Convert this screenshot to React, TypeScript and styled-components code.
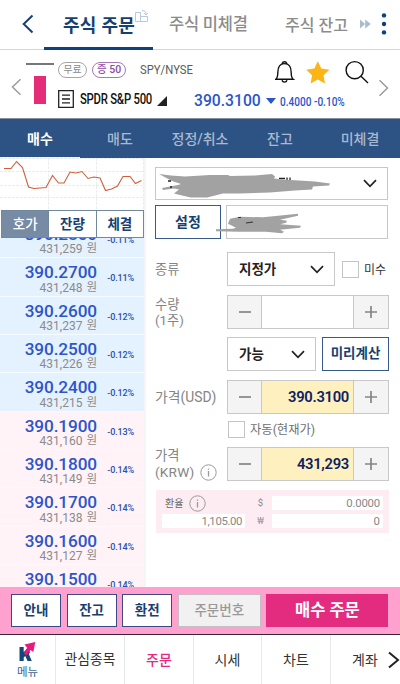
import React from 'react';
import styled, { createGlobalStyle, css } from 'styled-components';

const Global = createGlobalStyle`
  * { box-sizing: border-box; }
  html, body { margin: 0; padding: 0; background: #fff; }
  body { font-family: Roboto, "Noto Sans CJK KR", sans-serif; overflow: hidden; }
  button { font: inherit; }
`;

const navy = '#173f70';
const blue = '#2c55c9';

const Txt = styled.span<{ $s: number; $c?: string; $w?: number; $ls?: number; $sx?: number; $dy?: number }>`
  display: block;
  white-space: nowrap;
  line-height: 1;
  font-size: ${(p) => p.$s}px;
  color: ${(p) => p.$c || '#222'};
  font-weight: ${(p) => p.$w || 400};
  letter-spacing: ${(p) => p.$ls || 0}px;
  padding-top: ${(p) => p.$dy || 0}px;
  transform-origin: left center;
  ${(p) => p.$sx && css`transform: scaleX(${p.$sx});`}
`;

const Screen = styled.div`
  width: 400px;
  height: 684px;
  display: flex;
  flex-direction: column;
  overflow: hidden;
  background: #fff;
`;

const Header = styled.header`
  height: 50px;
  flex: none;
  display: grid;
  grid-template-columns: 44px 109px 110px 96px 14px 27px;
  border-bottom: 1px solid #d6d6d6;
`;
const HeadCell = styled.div<{ $active?: boolean; $pad?: number }>`
  height: 50px;
  display: flex;
  align-items: center;
  padding-left: ${(p) => p.$pad || 0}px;
  border-bottom: 3px solid ${(p) => (p.$active ? '#0e427c' : 'transparent')};
`;
const LinkIcon = styled.svg`
  flex: none;
  align-self: flex-start;
  margin: 10px 0 0 -1px;
`;

const Stock = styled.section`
  height: 69px;
  flex: none;
  display: grid;
  grid-template-columns: 26px 32px 320px 22px;
  border-bottom: 1px solid #87909c;
`;
const ArrowCell = styled.div<{ $right?: boolean }>`
  padding-top: ${(p) => (p.$right ? 29 : 28)}px;
  padding-left: ${(p) => (p.$right ? 0 : 11)}px;
`;
const Candle = styled.div`
  padding: 13px 0 0;
  display: flex;
  flex-direction: column;
  align-items: flex-start;
`;
const CandleLine = styled.div`
  width: 28px;
  height: 2px;
  background: #777;
`;
const CandleBody = styled.div`
  width: 12px;
  height: 28px;
  margin: 11px 0 0 8px;
  background: #e52c79;
`;
const StockInfo = styled.div`
  display: flex;
  flex-direction: column;
`;
const StockTop = styled.div`
  display: flex;
  height: 37px;
  align-items: flex-start;
  padding-top: 12px;
`;
const Pill = styled.div<{ $w: number; $c: string; $ml?: number }>`
  width: ${(p) => p.$w}px;
  height: 16px;
  margin-left: ${(p) => p.$ml || 0}px;
  border: 1px solid ${(p) => p.$c};
  border-radius: 8px;
  display: flex;
  align-items: center;
  justify-content: center;
`;
const Ticker = styled.div`
  width: 76px;
  flex: none;
  padding: 2px 0 0 14px;
`;
const TopIcons = styled.div`
  display: flex;
  margin: -3px 0 0 73px;
`;
const StockBottom = styled.div`
  display: flex;
  align-items: center;
  height: 24px;
`;
const StockName = styled.div`
  width: 77px;
  flex: none;
  margin-left: 6px;
`;
const Corner = styled.svg`
  flex: none;
  margin-top: 4px;
`;
const Quote = styled.div`
  display: flex;
  align-items: center;
  margin-left: 27px;
  padding-top: 4px;
`;
const Price = styled.div`
  width: 68px;
  flex: none;
`;
const Change = styled.div`
  width: 70px;
  padding-top: 2px;
`;

const Nav = styled.nav`
  height: 39px;
  flex: none;
  display: grid;
  grid-template-columns: repeat(5, 80px);
  background: #2d5385;
`;
const NavItem = styled.div<{ $active?: boolean }>`
  display: flex;
  align-items: center;
  justify-content: center;
  padding-top: ${(p) => (p.$active ? 2 : 1)}px;
  border-bottom: ${(p) => (p.$active ? '1px solid #f0f3f7' : '0')};
`;

const Main = styled.main`
  height: 429px;
  flex: none;
  display: flex;
`;
const Left = styled.aside`
  width: 146px;
  flex: none;
  display: flex;
  flex-direction: column;
  border-right: 2px solid #f5f5f9;
`;
const ModeTabs = styled.div`
  height: 28px;
  flex: none;
  display: flex;
  margin-left: 1px;
  width: 143px;
  border: 1px solid #71879b;
`;
const ModeTab = styled.div<{ $active?: boolean }>`
  flex: 1;
  display: flex;
  align-items: center;
  justify-content: center;
  padding-top: 1px;
  background: ${(p) => (p.$active ? '#778ba4' : '#fff')};
  & + & { border-left: 1px solid #71879b; }
`;
const Book = styled.div`
  flex: 1;
  overflow: hidden;
`;
const BookRows = styled.div`
  margin-top: -18px;
`;
const BookRow = styled.div<{ $bid?: boolean }>`
  height: 38.35px;
  display: grid;
  grid-template-columns: 97px 37px;
  background: ${(p) => (p.$bid ? '#fff3f8' : '#e4f1fe')};
  border-bottom: 1px solid ${(p) => (p.$bid ? '#fff8fb' : '#f6fbff')};
`;
const PriceCell = styled.div`
  display: flex;
  flex-direction: column;
  align-items: flex-end;
  padding-top: 6px;
`;
const Won = styled.div`
  display: flex;
  align-items: center;
  gap: 4px;
`;
const RateCell = styled.div`
  padding-top: 16px;
  display: flex;
  justify-content: flex-end;
`;

const Form = styled.div`
  flex: 1;
  padding: 9px 11px 0 9px;
`;
const Box = styled.div<{ $w: number; $h?: number; $tone?: 'navy'; $ml?: number }>`
  width: ${(p) => p.$w}px;
  height: ${(p) => p.$h || 34}px;
  margin-left: ${(p) => p.$ml || 0}px;
  flex: none;
  display: flex;
  align-items: center;
  justify-content: space-between;
  padding: 0 10px 0 11px;
  border: 1px solid #c8c8c8;
  background: #fff;
  ${(p) =>
    p.$tone === 'navy' &&
    css`
      border-color: #375a88;
      justify-content: center;
      padding: 0;
    `}
`;
const Account = styled.div`
  position: relative;
`;
const Scribble = styled.svg`
  position: absolute;
  left: -8px;
  top: 0;
  pointer-events: none;
`;
const Line = styled.div<{ $h?: number; $mt?: number }>`
  display: flex;
  align-items: center;
  height: ${(p) => p.$h || 34}px;
  margin-top: ${(p) => p.$mt || 0}px;
`;
const Label = styled.div`
  width: 72px;
  flex: none;
  display: flex;
  flex-direction: column;
  gap: 2px;
`;
const LabelLine = styled.div`
  display: flex;
  align-items: center;
  gap: 6px;
`;
const Check = styled.div<{ $ml: number }>`
  width: 17px;
  height: 17px;
  margin: 0 5px 0 ${(p) => p.$ml}px;
  flex: none;
  border: 1px solid #c4c4c4;
`;
const StepBox = styled.div`
  width: 162px;
  height: 34px;
  flex: none;
  display: grid;
  grid-template-columns: 33px 93px 34px;
  border: 1px solid #c8c8c8;
  background: #f4f4f4;
`;
const StepCell = styled.div`
  display: flex;
  align-items: center;
  justify-content: center;
`;
const StepValue = styled.div<{ $filled: boolean }>`
  display: flex;
  align-items: center;
  justify-content: flex-end;
  padding-right: 4px;
  border: solid #c8c8c8;
  border-width: 0 1px;
  background: ${(p) => (p.$filled ? '#fff0c0' : '#fff')};
`;
const Exchange = styled.div`
  width: 233px;
  height: 43px;
  margin: 9px 0 0 1px;
  padding: 6px 6px 5px;
  display: grid;
  grid-template-columns: 83px 27px 111px;
  grid-template-rows: 14px 14px;
  row-gap: 4px;
  background: #fdedf3;
`;
const ExValue = styled.div`
  background: #fff;
  display: flex;
  align-items: center;
  justify-content: flex-end;
  padding-right: 3px;
`;
const ExLabel = styled.div<{ $center?: boolean }>`
  display: flex;
  align-items: center;
  gap: 6px;
  padding-left: ${(p) => (p.$center ? 4 : 3)}px;
  justify-content: ${(p) => (p.$center ? 'center' : 'flex-start')};
`;

const ActionBar = styled.div`
  height: 48px;
  flex: none;
  display: flex;
  padding: 7px 11px 0;
  background: #fea1ce;
  border-bottom: 1px solid #3a2035;
`;
const Action = styled.button<{ $w: number; $kind?: 'order' | 'muted' }>`
  width: ${(p) => p.$w}px;
  height: 33px;
  flex: none;
  margin: 0 5.6px 0 0;
  padding: 1px 0 0;
  display: flex;
  align-items: center;
  justify-content: center;
  border-radius: 0;
  border: 1px solid ${(p) => (p.$kind === 'order' ? '#e32c80' : p.$kind === 'muted' ? '#c6bfc3' : '#3b4a87')};
  background: ${(p) => (p.$kind === 'order' ? '#e32c80' : p.$kind === 'muted' ? '#f1f1f1' : '#fff')};
`;

const Bottom = styled.nav`
  height: 49px;
  flex: none;
  display: grid;
  grid-template-columns: 55px 69px 69px 68px 69px 70px;
`;
const BottomItem = styled.div`
  display: flex;
  align-items: center;
  justify-content: center;
  border-left: 1px solid #e8e8e8;
`;
const Menu = styled.div`
  display: flex;
  flex-direction: column;
  align-items: center;
  padding-top: 6px;
`;
const Last = styled(BottomItem)`
  justify-content: flex-start;
  padding-left: 21px;
`;
const Chev = styled.svg`
  margin-left: 10px;
  flex: none;
`;

const Down = () => (
  <svg width="14" height="9" viewBox="0 0 14 9" fill="none" stroke="#222" strokeWidth="1.7">
    <path d="M1 1.2 7 7.3 13 1.2" />
  </svg>
);

const Info = () => (
  <svg width="17" height="17" viewBox="0 0 17 17" fill="none" stroke="#999" strokeWidth="1">
    <circle cx="8.5" cy="8.5" r="7.7" />
    <path d="M8.5 7v5.5M8.5 4.4v1.3" strokeWidth="1.3" />
  </svg>
);

function Stepper({ value }: { value?: string }) {
  return (
    <StepBox>
      <StepCell>
        <svg width="14" height="14" stroke="#858585" strokeWidth="1.7"><path d="M1 7h12" /></svg>
      </StepCell>
      <StepValue $filled={!!value}>
        {value && <Txt $s={14.8} $c="#0d2264" $w={600} $ls={-0.3} $dy={1}>{value}</Txt>}
      </StepValue>
      <StepCell>
        <svg width="14" height="14" stroke="#858585" strokeWidth="1.7"><path d="M1 7h12M7 1v12" /></svg>
      </StepCell>
    </StepBox>
  );
}

const book: [string, string, string][] = [
  ['390.2800', '431,259', '-0.11%'],
  ['390.2700', '431,248', '-0.11%'],
  ['390.2600', '431,237', '-0.12%'],
  ['390.2500', '431,226', '-0.12%'],
  ['390.2400', '431,215', '-0.12%'],
  ['390.1900', '431,160', '-0.13%'],
  ['390.1800', '431,149', '-0.14%'],
  ['390.1700', '431,138', '-0.14%'],
  ['390.1600', '431,127', '-0.14%'],
  ['390.1500', '431,116', '-0.14%'],
];

export default function App() {
  return (
    <Screen>
      <Global />
      <Header>
        <HeadCell $pad={22}>
          <svg width="12" height="20" fill="none" stroke={navy} strokeWidth="2"><path d="M10.5 1.5 1.7 10l8.8 8.5" /></svg>
        </HeadCell>
        <HeadCell $active $pad={19}>
          <Txt $s={18} $c={navy} $w={700} $ls={0.3} $dy={4}>주식 주문</Txt>
          <LinkIcon width="15" height="14" fill="none" stroke="#b8c9dc" strokeWidth="1">
            <path d="M1.5 2.5h5v9h-5zM6.5 6.5h7v5h-7M8 .5c3 0 4 1 4 4M10 3l2 2 2-2" />
          </LinkIcon>
        </HeadCell>
        <HeadCell $pad={16}><Txt $s={16.5} $c="#8c8c8c" $w={500} $ls={-0.2} $dy={4}>주식 미체결</Txt></HeadCell>
        <HeadCell $pad={22}><Txt $s={16} $c="#8c8c8c" $w={500} $dy={4}>주식 잔고</Txt></HeadCell>
        <HeadCell $pad={1}>
          <svg width="11" height="10" fill="#a9bdd0"><path d="M0 .5 5.2 5 0 9.5zM5.2 .5 10.7 5 5.2 9.5z" /></svg>
        </HeadCell>
        <HeadCell $pad={8}>
          <svg width="6" height="22" fill="#0e427c"><circle cx="3" cy="2.4" r="2.2" /><circle cx="3" cy="11" r="2.2" /><circle cx="3" cy="19.4" r="2.2" /></svg>
        </HeadCell>
      </Header>

      <Stock>
        <ArrowCell>
          <svg width="11" height="18" fill="none" stroke="#999" strokeWidth="1.4"><path d="M9.5 1.3 1.5 9l8 7.7" /></svg>
        </ArrowCell>
        <Candle><CandleLine /><CandleBody /></Candle>
        <StockInfo>
          <StockTop>
            <Pill $w={29} $c="#a5a5a5"><Txt $s={9.8} $c="#888">무료</Txt></Pill>
            <Pill $w={34} $c="#a679b5" $ml={5}><Txt $s={10.5} $c="#8e4ba3" $w={500}>증 50</Txt></Pill>
            <Ticker><Txt $s={12} $c="#5c5c5c" $sx={0.94}>SPY/NYSE</Txt></Ticker>
            <TopIcons>
              <svg width="94" height="26" fill="none" stroke="#111" strokeWidth="1.4">
                <path d="M.8 20.2c2-1.5 2-3.3 2-6.6 0-5.2 1.3-9 6.7-9s6.7 3.8 6.7 9c0 3.3 0 5.1 2 6.6zM7.2 4.5a2.4 2.4 0 0 1 4.6 0M7 21.2a2.6 2.6 0 0 0 5 0" />
                <path d="m42.8 2.2 3.5 7.4 8.1 1.1-5.9 5.6 1.5 8.1-7.2-4-7.2 4 1.5-8.1-5.9-5.6 8.1-1.1z" fill="#fdb515" stroke="none" />
                <circle cx="79.7" cy="11.2" r="8.6" />
                <path d="m86 17.2 7 6.7" />
              </svg>
            </TopIcons>
          </StockTop>
          <StockBottom>
            <svg width="16" height="18" fill="none" stroke="#222" strokeWidth="1.3">
              <path d="M.7.7h14.6v16.6H.7zM4 5.1h8M4 9h8M4 12.9h8" />
            </svg>
            <StockName><Txt $s={14} $c="#111" $w={500} $ls={-0.3} $sx={0.81}>SPDR S&amp;P 500</Txt></StockName>
            <Corner width="10" height="10" fill="#222"><path d="M10 0v10H0z" /></Corner>
            <Quote>
              <Price><Txt $s={16} $c={blue} $w={500} $sx={0.98}>390.3100</Txt></Price>
              <svg width="18" height="6" fill={blue}><path d="M4 0h10L9 6z" /></svg>
              <Change><Txt $s={12} $c={blue} $w={500} $sx={0.84}>0.4000 -0.10%</Txt></Change>
            </Quote>
          </StockBottom>
        </StockInfo>
        <ArrowCell $right>
          <svg width="11" height="18" fill="none" stroke="#999" strokeWidth="1.4"><path d="M1.5 1.3 9.5 9l-8 7.7" /></svg>
        </ArrowCell>
      </Stock>

      <Nav>
        {['매수', '매도', '정정/취소', '잔고', '미체결'].map((t, i) => (
          <NavItem key={t} $active={i === 0}>
            <Txt $s={14} $c={i ? '#a9b9d0' : '#fff'} $w={i ? 500 : 700}>{t}</Txt>
          </NavItem>
        ))}
      </Nav>

      <Main>
        <Left>
          <svg width="144" height="52" fill="none">
            <path d="M0 .5h144M0 13.5h144M0 27.5h144M0 39.5h144M48.5 0v52M96.5 0v52M143.5 0v52" stroke="#ececec" strokeDasharray="3 1" />
            <path d="M4 10.5h7L16.5 3.5 22.5 9.5 28.5 29 34 30.5 46 29.5 52.5 17.5 58.5 25h5.5L70 14l6 1 6-1.5 6 7 6-1.5 6 1 5.5 12.5 6-1.5 6-3 5.5-9.5h7l5.5 7 6-3" stroke="#cf5f3c" strokeWidth="1.1" />
          </svg>
          <ModeTabs>
            {['호가', '잔량', '체결'].map((t, i) => (
              <ModeTab key={t} $active={i === 0}>
                <Txt $s={13.5} $c={i ? navy : '#fff'} $w={i ? 700 : 500}>{t}</Txt>
              </ModeTab>
            ))}
          </ModeTabs>
          <Book>
            <BookRows>
              {book.map(([p, k, r], i) => (
                <BookRow key={p} $bid={i > 4}>
                  <PriceCell>
                    <Txt $s={17.2} $c={blue} $w={500} $ls={-0.1}>{p}</Txt>
                    <Won><Txt $s={12} $c="#8b8b8b">{k}</Txt><Txt $s={11.5} $c="#8b8b8b">원</Txt></Won>
                  </PriceCell>
                  <RateCell><Txt $s={9} $c="#2d50ac" $w={500} $ls={-0.15}>{r}</Txt></RateCell>
                </BookRow>
              ))}
            </BookRows>
          </Book>
        </Left>

        <Form>
          <Account>
            <Box $w={233} $h={33}><span /><Down /></Box>
            <Line $mt={5}>
              <Box $w={66} $tone="navy"><Txt $s={14} $c={navy} $w={700}>설정</Txt></Box>
              <Box $w={162} $ml={5} />
            </Line>
            <Scribble width="241" height="72" viewBox="147 167 241 72" fill="#a2a2a2">
              <path d="M279 178.5h6m2-1v5m3-5v5" stroke="#222" strokeWidth="1.3" />
              <path d="M159 174l12 1.5 14 1 25-1.500 18 0 2 1 25-.5 17-1.500 3 2.500-1 2 8 1 17 1 16 1 15 2-1 2-16 1-1 3-17 1-25 2-30 1-17 0-16 4-16 0-9-2-8-2 5-4-5-1-11 1.500-1-2 16-3 3-1-9-3z" />
              <path d="M168 181h3m-1 6h2" stroke="#222" strokeWidth="1.3" />
              <path d="M216 229.300l17-.5 3-1-8-4 2-5 10-2 23 .5 35-3.500v2l-18 4 7 1-1 2-6 1.500 21 1.500-1 2-20 2 4 2-2 1.500-16-1.500-26 0-24-.5z" />
              <path d="M238 217.500h3M246 223l7-1" stroke="#333" strokeWidth="1.1" />
            </Scribble>
          </Account>

          <Line $mt={13}>
            <Label><Txt $s={13.3} $c="#858585" $dy={1}>종류</Txt></Label>
            <Box $w={108}><Txt $s={13.5} $w={600} $dy={1}>지정가</Txt><Down /></Box>
            <Check $ml={7} />
            <Txt $s={12} $c="#333" $dy={1}>미수</Txt>
          </Line>
          <Line $mt={9}>
            <Label><Txt $s={13.3} $c="#858585" $dy={1}>수량</Txt><Txt $s={13.3} $c="#858585">(1주)</Txt></Label>
            <Stepper />
          </Line>
          <Line $mt={8}>
            <Label />
            <Box $w={89}><Txt $s={13.5} $w={600} $dy={1}>가능</Txt><Down /></Box>
            <Box $w={67} $ml={6} $tone="navy"><Txt $s={13.5} $c={navy} $w={700}>미리계산</Txt></Box>
          </Line>
          <Line $mt={9}>
            <Label><Txt $s={14} $c="#858585" $sx={0.99}>가격(USD)</Txt></Label>
            <Stepper value="390.3100" />
          </Line>
          <Line $h={17} $mt={7}>
            <Label />
            <Check $ml={1} />
            <Txt $s={12.3} $c="#707070" $dy={2}>자동(현재가)</Txt>
          </Line>
          <Line $mt={9}>
            <Label>
              <Txt $s={13.3} $c="#858585" $dy={2}>가격</Txt>
              <LabelLine><Txt $s={13.6} $c="#858585" $ls={0.2}>(KRW)</Txt><Info /></LabelLine>
            </Label>
            <Stepper value="431,293" />
          </Line>
          <Exchange>
            <ExLabel><Txt $s={10} $c="#666" $dy={1}>환율</Txt><Info /></ExLabel>
            <ExLabel $center><Txt $s={9.5} $c="#888">$</Txt></ExLabel>
            <ExValue><Txt $s={11.4} $c="#888" $ls={-0.2} $dy={1}>0.0000</Txt></ExValue>
            <ExValue><Txt $s={11.4} $c="#888" $ls={-0.4} $dy={1}>1,105.00</Txt></ExValue>
            <ExLabel $center><Txt $s={9} $c="#999">₩</Txt></ExLabel>
            <ExValue><Txt $s={11.4} $c="#888" $dy={1}>0</Txt></ExValue>
          </Exchange>
        </Form>
      </Main>

      <ActionBar>
        {['안내', '잔고', '환전'].map((t) => (
          <Action key={t} $w={50}><Txt $s={13.5} $c={navy} $w={700}>{t}</Txt></Action>
        ))}
        <Action $w={83} $kind="muted"><Txt $s={13.5} $c="#999" $w={500}>주문번호</Txt></Action>
        <Action $w={122} $kind="order"><Txt $s={16.5} $c="#fff" $w={700} $dy={1}>매수 주문</Txt></Action>
      </ActionBar>

      <Bottom>
        <Menu>
          <svg width="18" height="22" viewBox="0 0 18 22">
            <path d="M.5 6h4.2v5.200L9 6.500l2 5-1.200 1.500 3 7H8.500L6.300 15l-1.600 1.500V20H.5z" fill="#174779" />
            <path d="M5 12.500 8.200 6.800 5.500 3.500 16.300 1l-2 10-2.800-2-4 5.500z" fill="#ea197e" />
          </svg>
          <Txt $s={11.5} $c="#41648d" $dy={4}>메뉴</Txt>
        </Menu>
        <BottomItem><Txt $s={13.8} $c="#333">관심종목</Txt></BottomItem>
        <BottomItem><Txt $s={14} $c="#e32c80" $w={500}>주문</Txt></BottomItem>
        <BottomItem><Txt $s={14} $c="#333">시세</Txt></BottomItem>
        <BottomItem><Txt $s={14} $c="#333">차트</Txt></BottomItem>
        <Last>
          <Txt $s={14} $c="#333">계좌</Txt>
          <Chev width="12" height="18" fill="none" stroke="#222" strokeWidth="2"><path d="M1 1.5 10 9 1 16.5" /></Chev>
        </Last>
      </Bottom>
    </Screen>
  );
}
